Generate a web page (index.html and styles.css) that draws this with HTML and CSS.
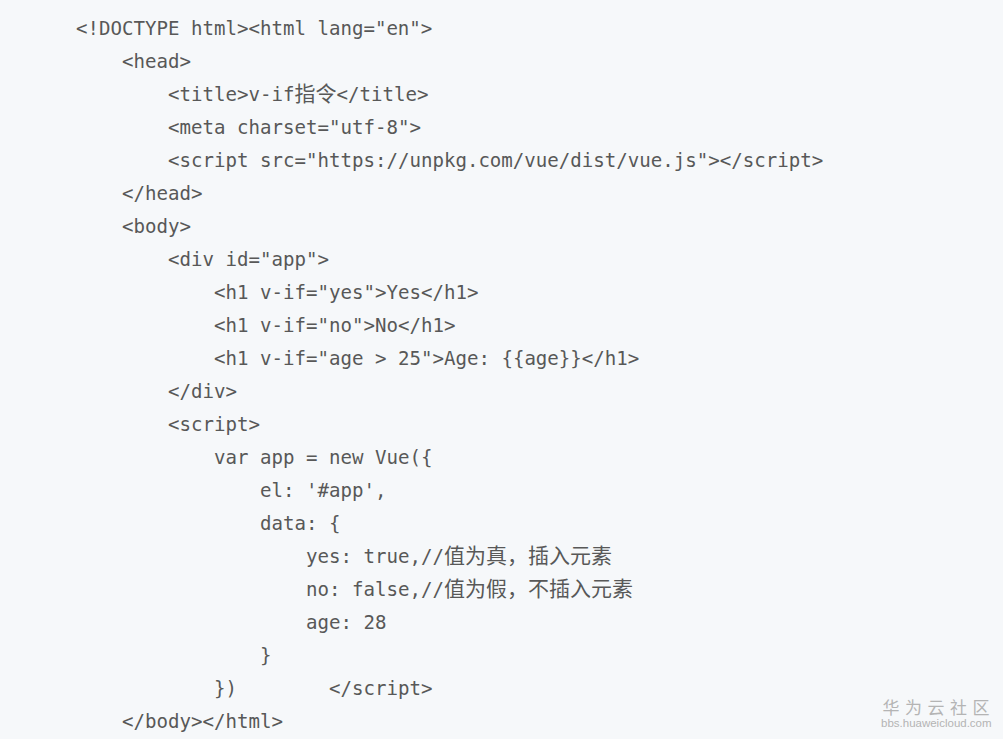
FILE: index.html
```html
<!DOCTYPE html>
<html lang="zh">
<head>
<meta charset="utf-8">
<link rel="stylesheet" href="styles.css">
</head>
<body>
<div class="page">
<div class="code">
<div class="line">&lt;!DOCTYPE html&gt;&lt;html lang="en"&gt;</div>
<div class="line i1">&lt;head&gt;</div>
<div class="line i2"><span>&lt;title&gt;v-if</span><span class="cjk">指令</span><span>&lt;/title&gt;</span></div>
<div class="line i2">&lt;meta charset="utf-8"&gt;</div>
<div class="line i2">&lt;script src="https://unpkg.com/vue/dist/vue.js"&gt;&lt;/script&gt;</div>
<div class="line i1">&lt;/head&gt;</div>
<div class="line i1">&lt;body&gt;</div>
<div class="line i2">&lt;div id="app"&gt;</div>
<div class="line i3">&lt;h1 v-if="yes"&gt;Yes&lt;/h1&gt;</div>
<div class="line i3">&lt;h1 v-if="no"&gt;No&lt;/h1&gt;</div>
<div class="line i3">&lt;h1 v-if="age &gt; 25"&gt;Age: {{age}}&lt;/h1&gt;</div>
<div class="line i2">&lt;/div&gt;</div>
<div class="line i2">&lt;script&gt;</div>
<div class="line i3">var app = new Vue({</div>
<div class="line i4">el: '#app',</div>
<div class="line i4">data: {</div>
<div class="line i5"><span>yes: true,//</span><span class="cjk">值为真，插入元素</span></div>
<div class="line i5"><span>no: false,//</span><span class="cjk">值为假，不插入元素</span></div>
<div class="line i5">age: 28</div>
<div class="line i4">}</div>
<div class="line i3">})        &lt;/script&gt;</div>
<div class="line i1">&lt;/body&gt;&lt;/html&gt;</div>
</div>
<div class="watermark">
<div class="wm-name">华为云社区</div>
<div class="wm-url">bbs.huaweicloud.com</div>
</div>
</div>
</body>
</html>
```
FILE: styles.css
```css
html, body {
  margin: 0;
  padding: 0;
  background: #f6f8fa;
}
.page {
  position: relative;
  width: 1003px;
  height: 739px;
  overflow: hidden;
  background: #f6f8fa;
}
.code {
  padding: 12px 0 0 76px;
  font-family: "DejaVu Sans Mono", "Noto Sans CJK SC", monospace;
  font-size: 19.1px;
  line-height: 33px;
  color: #585858;
}
.line {
  height: 33px;
  white-space: pre;
}
.i1 { padding-left: 46px; }
.i2 { padding-left: 92px; }
.i3 { padding-left: 138px; }
.i4 { padding-left: 184px; }
.i5 { padding-left: 230px; }
.cjk {
  font-family: "Noto Sans CJK SC", sans-serif;
  font-size: 21px;
  line-height: 19px;
}
.watermark {
  position: absolute;
  right: 12px;
  bottom: 9px;
  width: 110px;
  color: #b4b4b4;
  text-align: center;
  font-family: "Noto Sans CJK SC", sans-serif;
}
.wm-name {
  font-size: 17px;
  line-height: 20px;
  letter-spacing: 5.5px;
  margin-right: -5.5px;
}
.wm-url {
  font-family: "Liberation Sans", sans-serif;
  font-size: 11.5px;
  line-height: 13px;
}
```
